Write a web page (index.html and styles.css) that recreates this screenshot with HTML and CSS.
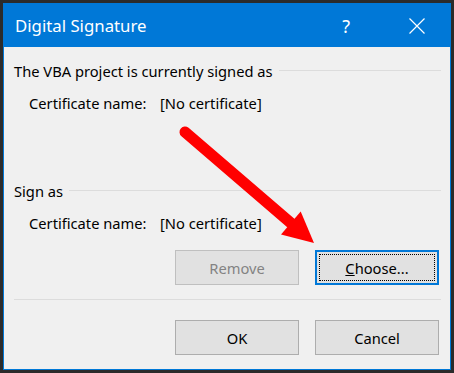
FILE: index.html
```html
<!DOCTYPE html>
<html>
<head>
<meta charset="utf-8">
<link rel="stylesheet" href="styles.css">
</head>
<body>
<div class="dialog">
  <div class="titlebar">
    <span class="title">Digital Signature</span>
    <span class="help">?</span>
    <svg class="close" width="16" height="16" viewBox="0 0 16 16"><path d="M0.5 0.5 L15.5 15.5 M15.5 0.5 L0.5 15.5" stroke="#fff" stroke-width="1.2" fill="none"/></svg>
  </div>
  <div class="content">
    <div class="group-head"><span>The VBA project is currently signed as</span><span class="rule"></span></div>
    <div class="cert-row"><span class="label">Certificate name:</span><span>[No certificate]</span></div>
    <div class="group-head sign"><span>Sign as</span><span class="rule"></span></div>
    <div class="cert-row"><span class="label">Certificate name:</span><span>[No certificate]</span></div>
    <div class="buttons top">
      <div class="btn disabled">Remove</div>
      <div class="btn focused"><span class="focus"><u>C</u>hoose...</span></div>
    </div>
    <div class="separator"></div>
    <div class="buttons bottom">
      <div class="btn">OK</div>
      <div class="btn">Cancel</div>
    </div>
  </div>
</div>
<svg class="arrow" width="454" height="373" viewBox="0 0 454 373">
  <line x1="185" y1="132" x2="292" y2="224" stroke="#ff0000" stroke-width="11" stroke-linecap="round"/>
  <polygon points="300.7,211.5 281,234.5 314,243" fill="#ff0000"/>
</svg>
</body>
</html>
```
FILE: styles.css
```css
html, body {
  margin: 0;
  padding: 0;
}
body {
  background: #2b2b2b;
  padding: 3px;
  width: 448px;
  height: 367px;
  font-family: "Noto Sans", "Open Sans", sans-serif;
  font-size: 14.7px;
  color: #000;
}
.dialog {
  width: 446px;
  height: 365px;
  border: 1px solid #0078d7;
  background: #f0f0f0;
  display: flex;
  flex-direction: column;
}
.titlebar {
  height: 43px;
  background: #0078d7;
  color: #fff;
  display: flex;
  align-items: center;
  padding-left: 11px;
  padding-right: 25px;
}
.title {
  font-size: 16.8px;
  flex: 1;
}
.help {
  font-size: 18px;
  margin-right: 59px;
}
.close {
  display: block;
}
.content {
  padding: 14px 9px 0 10px;
  display: flex;
  flex-direction: column;
}
.group-head {
  height: 20px;
  line-height: 20px;
  display: flex;
  align-items: center;
  gap: 6px;
}
.group-head .rule {
  flex: 1;
  height: 1px;
  background: #dcdcdc;
  margin-top: -2px;
}
.group-head.sign {
  margin-top: 68px;
}
.cert-row {
  height: 20px;
  line-height: 20px;
  margin-top: 12px;
  padding-left: 15px;
  display: flex;
}
.cert-row .label {
  width: 131px;
}
.buttons {
  display: flex;
  justify-content: flex-end;
  gap: 16px;
  padding-right: 2px;
}
.buttons.top {
  margin-top: 17px;
}
.buttons.bottom {
  margin-top: 20px;
}
.btn {
  box-sizing: border-box;
  width: 124px;
  height: 35px;
  border: 1px solid #adadad;
  background: #e1e1e1;
  display: flex;
  align-items: center;
  justify-content: center;
}
.btn.disabled {
  color: #838383;
  border-color: #bfbfbf;
}
.btn.focused {
  border: 2px solid #0078d7;
  padding: 2px;
}
.focus {
  flex: 1;
  align-self: stretch;
  border: 1px dotted #000;
  display: flex;
  align-items: center;
  justify-content: center;
}
.separator {
  height: 1px;
  background: #dcdcdc;
  margin-top: 14px;
}
.arrow {
  position: absolute;
  left: 0;
  top: 0;
  pointer-events: none;
}
```
